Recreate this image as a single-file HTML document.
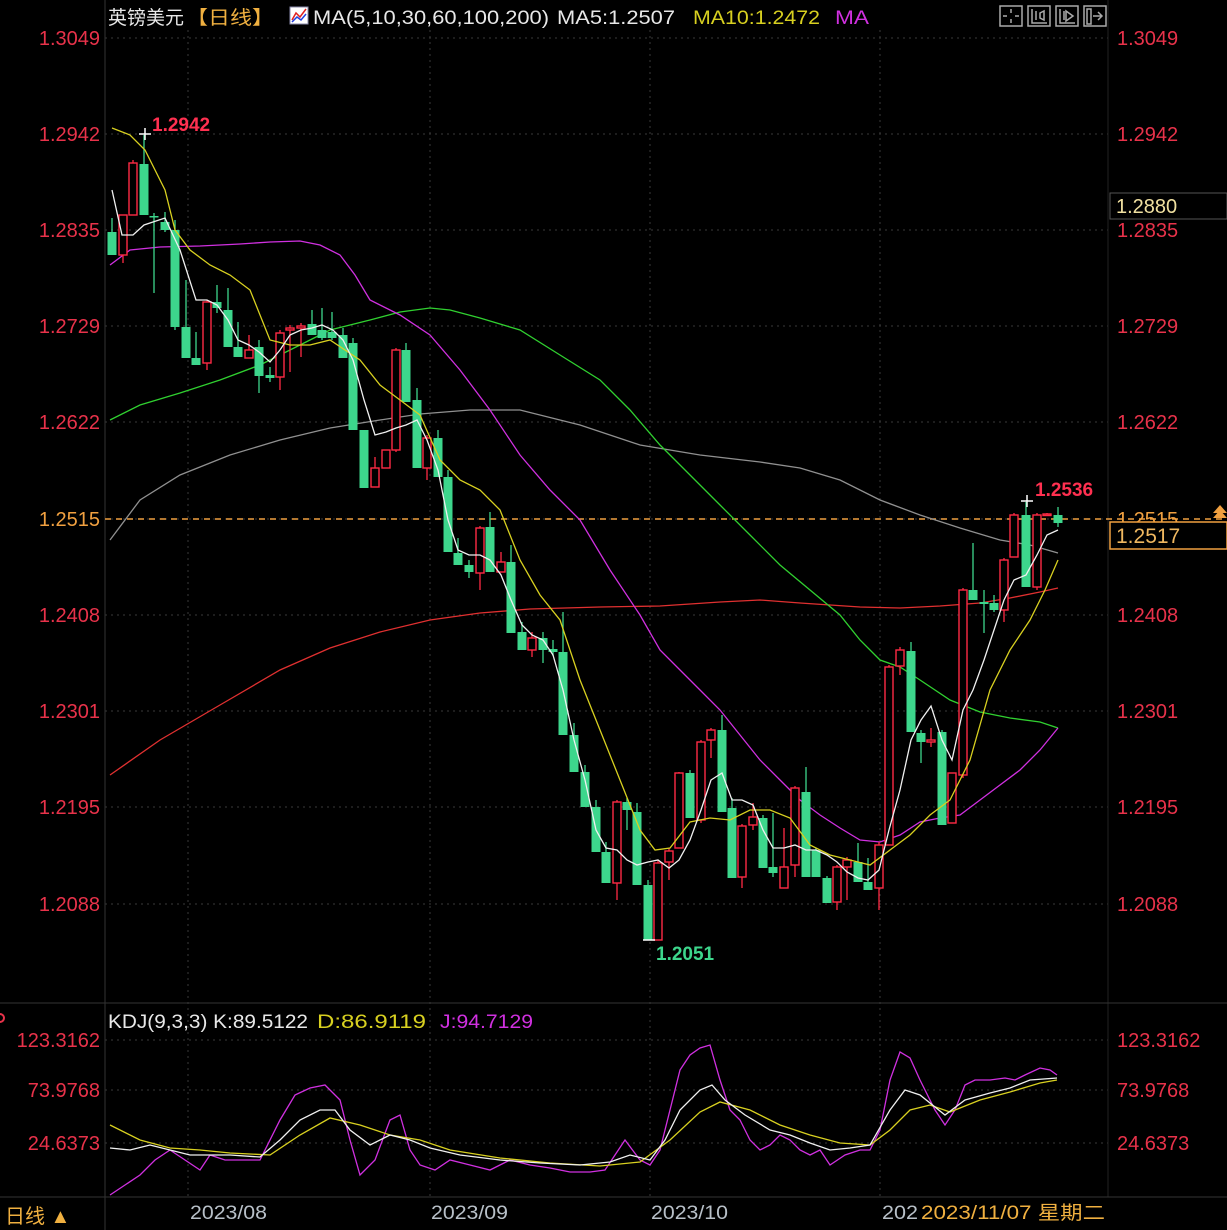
<!DOCTYPE html>
<html><head><meta charset="utf-8"><style>
html,body{margin:0;padding:0;background:#000;width:1227px;height:1230px;overflow:hidden}
svg{display:block}
text{font-family:"Liberation Sans","Noto Sans CJK SC",sans-serif}
</style></head><body>
<svg id="c" width="1227" height="1230" xmlns="http://www.w3.org/2000/svg">
<rect width="1227" height="1230" fill="#000"/>
<g id="grid" stroke="#3a3a3a" stroke-width="1" stroke-dasharray="2,4"></g>
<line x1="105" y1="0" x2="105" y2="1230" stroke="#333"/>
<line x1="1108" y1="0" x2="1108" y2="1197" stroke="#222"/>
<line x1="0" y1="1003" x2="1227" y2="1003" stroke="#333"/>
<line x1="0" y1="1197" x2="1227" y2="1197" stroke="#333"/>
<g id="lab" font-size="20" fill="#e8324a"></g>
<line x1="105" y1="519" x2="1227" y2="519" stroke="#f0a040" stroke-width="1.5" stroke-dasharray="6,5"/>
<g id="ma" fill="none" stroke-width="1.3"></g>
<g id="cd"></g>
<g id="kdj" fill="none" stroke-width="1.3"></g>
<!-- header -->
<text x="108" y="24" font-size="19" fill="#e8e8e8" textLength="76" lengthAdjust="spacingAndGlyphs">英镑美元</text>
<text x="186" y="24" font-size="19" fill="#f0b040" textLength="88" lengthAdjust="spacingAndGlyphs">【日线】</text>
<rect x="290" y="7" width="18" height="17" fill="#fff" stroke="#88a" />
<polyline points="292,20 296,13 300,17 306,9" fill="none" stroke="#e02020" stroke-width="1.5"/>
<polyline points="292,22 297,17 301,20 306,14" fill="none" stroke="#2040e0" stroke-width="1.5"/>
<text x="313" y="24" font-size="19" fill="#e8e8e8" textLength="236" lengthAdjust="spacingAndGlyphs">MA(5,10,30,60,100,200)</text>
<text x="557" y="24" font-size="19" fill="#e8e8e8" textLength="118" lengthAdjust="spacingAndGlyphs">MA5:1.2507</text>
<text x="693" y="24" font-size="19" fill="#d8d020" textLength="127" lengthAdjust="spacingAndGlyphs">MA10:1.2472</text>
<text x="835" y="24" font-size="19" fill="#d030e0" textLength="34" lengthAdjust="spacingAndGlyphs">MA</text>
<g fill="none" stroke="#aaa" stroke-width="1.5">
<rect x="1000" y="6" width="22" height="20"/><rect x="1028" y="6" width="22" height="20"/>
<rect x="1056" y="6" width="22" height="20"/><rect x="1084" y="6" width="22" height="20"/>
<path d="M1011 9v4M1011 19v4M1003 16h4M1015 16h4"/>
<path d="M1032 9v14h15M1036 11v9M1040 13l4-2v9l-4-2z"/>
<path d="M1060 9v14h15M1064 11v9M1066 11l7 5-7 5z"/>
<path d="M1087 9v15h4v-15zM1093 16h8M1098 12l4 4-4 4"/>
</g>
<!-- price labels -->
<rect x="1110" y="193" width="117" height="26" fill="#000" stroke="#555"/>
<text x="1116" y="213" font-size="20" fill="#f0e0a0">1.2880</text>
<rect x="1110" y="522" width="117" height="27" fill="#000" stroke="#f0a040" stroke-width="1.5"/>
<text x="1116" y="543" font-size="21" fill="#f0b860">1.2517</text>
<path d="M1213 518l7-8 7 8M1213 513l7-8 7 8" fill="#f0a040"/>
<text x="152" y="131" font-size="19" font-weight="bold" fill="#ff3050">1.2942</text>
<text x="1035" y="496" font-size="19" font-weight="bold" fill="#ff3050">1.2536</text>
<text x="656" y="960" font-size="19" font-weight="bold" fill="#3dd68c">1.2051</text>
<path d="M139 134h12M145 128v12M1021 501h12M1027 495v12M643 940h12" stroke="#fff" stroke-width="1.5"/>
<!-- KDJ header -->
<text x="108" y="1028" font-size="19" fill="#e8e8e8" textLength="200" lengthAdjust="spacingAndGlyphs">KDJ(9,3,3) K:89.5122</text>
<text x="317" y="1028" font-size="19" fill="#d8d020" textLength="109" lengthAdjust="spacingAndGlyphs">D:86.9119</text>
<text x="440" y="1028" font-size="19" fill="#d030e0" textLength="93" lengthAdjust="spacingAndGlyphs">J:94.7129</text>
<circle cx="0" cy="1018" r="4" fill="none" stroke="#e8324a" stroke-width="2"/>
<!-- bottom axis -->
<text x="5" y="1223" font-size="20" fill="#f0b040">日线 ▲</text>
<g font-size="19" fill="#b8c0c8">
<text x="190" y="1219" textLength="77" lengthAdjust="spacingAndGlyphs">2023/08</text>
<text x="431" y="1219" textLength="77" lengthAdjust="spacingAndGlyphs">2023/09</text>
<text x="651" y="1219" textLength="77" lengthAdjust="spacingAndGlyphs">2023/10</text>
<text x="882" y="1219" textLength="36" lengthAdjust="spacingAndGlyphs">202</text>
</g>
<rect x="919" y="1199" width="188" height="30" fill="#000"/>
<text x="921" y="1219" font-size="19" fill="#f0b040" textLength="184" lengthAdjust="spacingAndGlyphs">2023/11/07 星期二</text>
</svg>
<script>
var NS="http://www.w3.org/2000/svg";
function el(p,t,a){var e=document.createElementNS(NS,t);for(var k in a)e.setAttribute(k,a[k]);p.appendChild(e);return e;}
var grid=document.getElementById('grid');
var ys=[38,134,230,326,422,519,615,711,807,904];
var vs=["1.3049","1.2942","1.2835","1.2729","1.2622","1.2515","1.2408","1.2301","1.2195","1.2088"];
ys.forEach(function(y){el(grid,'line',{x1:105,y1:y,x2:1108,y2:y});});
[1040,1090,1143].forEach(function(y){el(grid,'line',{x1:105,y1:y,x2:1108,y2:y});});
[188,430,650,880].forEach(function(x){el(grid,'line',{x1:x,y1:30,x2:x,y2:1197});});
var lab=document.getElementById('lab');
ys.forEach(function(y,i){
 var c=i==5?"#f0a040":"#e8324a";
 var t=el(lab,'text',{x:100,y:y+7,'text-anchor':'end',fill:c});t.textContent=vs[i];
 var t2=el(lab,'text',{x:1117,y:y+7,fill:c});t2.textContent=vs[i];
});
[["123.3162",1040],["73.9768",1090],["24.6373",1143]].forEach(function(a){
 var t=el(lab,'text',{x:100,y:a[1]+7,'text-anchor':'end'});t.textContent=a[0];
 var t2=el(lab,'text',{x:1117,y:a[1]+7});t2.textContent=a[0];
});
function pl(g,col,s){el(g,'polyline',{points:s,stroke:col,fill:'none','stroke-width':1.3});}
var ma=document.getElementById('ma');
pl(ma,"#e03030","110,775 160,740 220,705 280,670 330,648 380,632 430,620 480,613 530,609 600,607 660,606 720,602 760,600 800,603 860,607 900,608 940,606 980,603 1010,598 1040,592 1058,588");
pl(ma,"#909090","110,540 140,500 180,475 230,455 280,440 330,428 380,420 420,414 470,410 520,410 580,425 640,445 700,455 760,462 800,468 840,480 880,500 920,515 960,528 1000,540 1030,545 1058,553");
pl(ma,"#30d030","110,420 140,405 180,393 220,380 260,365 300,345 330,330 370,320 400,312 430,308 450,310 480,318 520,330 560,355 600,380 630,410 660,445 690,475 720,505 750,535 780,565 810,590 840,615 860,640 880,660 900,667 920,680 950,700 980,712 1010,718 1040,722 1058,728");
pl(ma,"#d030e0","110,265 130,250 160,247 200,246 240,244 270,242 300,241 320,245 340,255 355,275 370,300 400,315 430,335 460,370 490,410 520,455 550,490 580,520 610,570 640,615 660,650 680,670 700,690 720,710 740,735 760,760 780,780 800,800 820,815 840,828 860,840 880,842 900,835 920,822 940,818 960,815 980,800 1000,785 1020,770 1040,750 1058,728");
var cd=document.getElementById('cd');
var C=[
[112,232,255,218,255],[123,255,215,215,263],[133,215,163,160,215],[144,164,215,135,215],[154,216,217,213,293],
[165,222,230,212,232],[175,230,327,220,330],[186,327,358,280,358],[196,358,365,332,365],[207,363,302,300,370],
[217,302,308,285,313],[228,310,347,288,347],[238,347,357,322,357],[249,358,350,335,358],[259,347,376,340,393],
[270,375,378,367,382],[280,377,333,330,390],[290,330,328,325,372],[301,328,326,323,357],[312,324,335,310,335],
[322,330,338,308,340],[332,332,338,312,340],[343,335,358,328,358],[353,343,430,338,430],[364,430,488,430,488],
[375,487,468,457,487],[386,468,450,450,468],[396,450,350,348,452],[406,350,402,343,402],[417,400,468,388,468],
[427,468,438,435,480],[438,438,477,430,477],[448,477,552,470,552],[458,553,565,538,565],[469,565,572,560,578],
[480,573,528,526,590],[490,527,572,512,572],[501,572,562,552,572],[511,562,633,545,633],[522,632,650,622,650],
[532,650,638,632,657],[543,638,650,632,663],[553,649,652,640,656],[563,652,735,612,735],[574,735,772,723,772],
[585,772,807,765,807],[596,807,852,800,852],[606,852,883,842,883],[617,883,802,800,900],[627,802,810,798,830],
[637,812,885,803,885],[648,885,940,880,940],[658,940,863,860,940],[669,862,851,848,880],[679,848,773,772,848],
[690,773,818,770,818],[701,820,742,740,823],[711,740,730,728,758],[722,730,812,715,812],[732,808,878,798,878],
[742,877,826,824,888],[753,825,817,803,830],[763,818,868,815,868],[773,867,873,813,877],[784,888,867,828,888],
[795,865,788,786,877],[806,792,877,767,877],[816,850,877,848,877],[827,878,903,876,903],[837,902,867,865,910],
[847,867,860,857,900],[858,862,882,843,882],[868,882,890,858,890],[879,888,845,842,910],[889,845,667,665,845],
[900,666,650,647,675],[911,651,732,642,732],[921,733,742,730,763],[931,742,740,728,747],[942,732,825,730,825],
[952,823,773,773,823],[963,775,590,588,778],[973,590,600,543,600],[984,602,604,590,633],[994,603,610,595,612],
[1004,610,560,558,622],[1014,557,515,513,557],[1026,515,587,502,587],[1037,587,515,513,590],[1047,515,514,513,515],
[1058,515,523,507,527]];
C.forEach(function(c){
 var x=c[0],o=c[1],cl=c[2],h=c[3],l=c[4];
 var up=cl<o, col=up?"#ff2a44":"#3dd68c";
 var top=Math.min(o,cl),bot=Math.max(o,cl),hgt=Math.max(bot-top,1.5);
 el(cd,'line',{x1:x,y1:h,x2:x,y2:top,stroke:col,'stroke-width':1.3});
 el(cd,'line',{x1:x,y1:top+hgt,x2:x,y2:Math.max(l,top+hgt),stroke:col,'stroke-width':1.3});
 if(up) el(cd,'rect',{x:x-4,y:top,width:8,height:hgt,fill:"#000",stroke:col,'stroke-width':1.4});
 else el(cd,'rect',{x:x-4.5,y:top,width:9,height:hgt,fill:col});
});
pl(cd,"#d8d020","112,128 130,135 145,150 165,190 175,230 190,250 210,265 230,275 250,290 270,340 290,345 310,345 330,340 345,350 360,360 380,385 400,400 420,415 440,460 460,480 480,490 500,510 520,560 540,595 560,620 580,680 600,730 620,780 640,830 655,850 670,848 690,822 710,818 730,820 750,810 770,810 790,818 810,845 830,855 850,860 870,865 890,850 910,835 930,815 950,800 970,760 990,690 1010,650 1030,620 1045,590 1058,560");
pl(cd,"#f0f0f0","112,190 122,235 133,235 144,225 165,218 180,250 196,300 207,300 217,305 228,320 238,340 249,345 259,352 270,362 280,350 290,335 301,330 312,328 322,325 333,330 343,340 353,360 364,400 375,435 386,432 396,428 406,425 417,420 427,440 438,470 448,520 458,550 469,555 480,555 490,560 501,575 511,600 522,625 532,635 543,640 553,655 563,690 574,740 585,780 596,830 606,848 617,850 627,860 637,865 648,862 658,860 669,868 679,860 690,840 701,810 711,780 722,773 732,800 742,800 753,805 763,830 773,848 784,848 795,845 806,850 816,850 827,855 837,862 847,872 858,878 868,880 879,870 889,830 900,790 911,740 921,720 931,706 942,740 952,760 963,710 973,690 984,660 994,630 1004,600 1014,580 1026,575 1037,555 1047,535 1058,530");
var k=document.getElementById('kdj');
pl(k,"#d030e0","110,1195 125,1185 140,1175 155,1160 170,1150 185,1160 200,1170 210,1155 225,1160 240,1160 260,1160 280,1120 295,1095 310,1088 325,1085 340,1100 350,1140 360,1175 375,1160 390,1120 400,1115 410,1150 420,1165 435,1170 450,1160 470,1165 490,1170 510,1160 530,1165 550,1168 570,1172 590,1172 605,1170 615,1155 625,1140 640,1160 650,1165 660,1150 670,1110 680,1070 690,1055 700,1048 710,1045 720,1080 730,1110 740,1120 750,1140 760,1150 770,1145 780,1135 790,1140 800,1150 810,1155 820,1150 830,1165 845,1155 860,1150 870,1150 880,1130 890,1080 900,1052 910,1058 920,1080 935,1110 945,1125 955,1110 965,1085 975,1080 990,1080 1005,1078 1015,1080 1025,1075 1040,1068 1050,1070 1057,1075");
pl(k,"#d8d020","110,1125 140,1140 170,1148 200,1150 230,1153 270,1155 300,1135 330,1118 360,1125 390,1135 420,1140 450,1150 500,1158 550,1163 600,1166 640,1162 670,1140 700,1112 720,1102 750,1110 780,1125 810,1135 840,1143 870,1145 890,1130 910,1110 930,1105 950,1112 980,1100 1010,1092 1040,1083 1057,1080");
pl(k,"#f0f0f0","110,1148 130,1150 150,1145 170,1150 190,1155 210,1155 230,1155 260,1157 280,1140 300,1120 320,1110 335,1110 350,1130 370,1145 390,1135 410,1140 430,1148 460,1155 500,1160 540,1163 580,1165 610,1162 630,1155 650,1160 665,1140 680,1110 700,1090 712,1085 725,1100 745,1115 770,1130 790,1135 810,1143 830,1150 850,1148 870,1145 890,1110 905,1090 920,1095 945,1115 965,1100 990,1093 1010,1088 1030,1080 1057,1078");
</script>
</body></html>
